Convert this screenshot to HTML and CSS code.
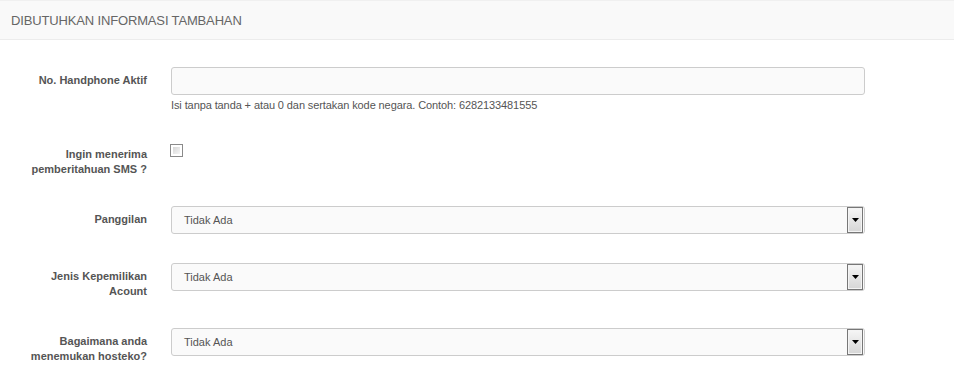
FILE: index.html
```html
<!DOCTYPE html>
<html lang="id">
<head>
  <meta charset="UTF-8" />
  <title>Informasi Tambahan</title>
  <link rel="stylesheet" href="styles.css">
</head>
<body>

<div class="panel-heading">DIBUTUHKAN INFORMASI TAMBAHAN</div>

<form class="form-horizontal">
  <!-- No. handphone -->
  <div class="form-group">
    <label class="control-label" for="hp">No. Handphone Aktif</label>
    <div class="controls">
      <input type="text" id="hp" class="form-control">
      <div class="help-block">Isi tanpa tanda + atau 0 dan sertakan kode negara. Contoh: 6282133481555</div>
    </div>
  </div>

  <!-- SMS -->
  <div class="form-group">
    <label class="control-label check-label" for="sms">Ingin menerima pemberitahuan SMS ?</label>
    <div class="controls">
      <input type="checkbox" id="sms" class="checkbox">
    </div>
  </div>

  <div class="form-group">
    <label class="control-label">Panggilan</label>
    <div class="controls">
      <div class="select"><span class="select-text">Tidak Ada</span><span class="select-btn"><svg width="7" height="4" viewBox="0 0 7 4"><polygon points="0,0 7,0 3.5,4" fill="#000"/></svg></span></div>
    </div>
  </div>

  <div class="form-group">
    <label class="control-label">Jenis Kepemilikan Acount</label>
    <div class="controls">
      <div class="select"><span class="select-text">Tidak Ada</span><span class="select-btn"><svg width="7" height="4" viewBox="0 0 7 4"><polygon points="0,0 7,0 3.5,4" fill="#000"/></svg></span></div>
    </div>
  </div>

  <div class="form-group">
    <label class="control-label">Bagaimana anda menemukan hosteko?</label>
    <div class="controls">
      <div class="select"><span class="select-text">Tidak Ada</span><span class="select-btn"><svg width="7" height="4" viewBox="0 0 7 4"><polygon points="0,0 7,0 3.5,4" fill="#000"/></svg></span></div>
    </div>
  </div>
</form>

</body>
</html>
```

FILE: styles.css
```css
body {
  margin: 0;
  background: #fff;
  font-family: "Liberation Sans", Arial, sans-serif;
  color: #555;
}
.panel-heading {
  height: 40px;
  line-height: 39px;
  padding-left: 11px;
  box-sizing: border-box;
  background: #f9f9f9;
  border-top: 1px solid #f0f0f0;
  border-bottom: 1px solid #ececec;
  font-size: 13px;
  letter-spacing: -0.15px;
  color: #666;
}
.form-horizontal {
  padding-top: 27px;
}
.form-group {
  display: grid;
  grid-template-columns: 147px 694px;
  column-gap: 24px;
  align-items: start;
  margin-bottom: 29px;
}
.control-label {
  padding-top: 6px;
  padding-left: 30px;
  font-size: 11px;
  font-weight: bold;
  line-height: 15px;
  text-align: right;
  color: #555;
}
.check-label {
  padding-top: 3px;
}
.form-control {
  display: block;
  width: 100%;
  height: 28px;
  margin: 0;
  box-sizing: border-box;
  border: 1px solid #ccc;
  border-radius: 3px;
  background: #fafafa;
}
.help-block {
  margin: 3px 0 2px;
  font-size: 11px;
  line-height: 15px;
  letter-spacing: -0.1px;
  color: #555;
}
.checkbox {
  appearance: none;
  -webkit-appearance: none;
  display: block;
  width: 13px;
  height: 13px;
  margin: 0 0 0 -1px;
  padding: 2px;
  box-sizing: border-box;
  border: 1px solid #8a8a8a;
  background: linear-gradient(135deg, #d6d6d6, #f6f6f6) content-box, #fff;
}
.select {
  display: flex;
  align-items: center;
  height: 28px;
  box-sizing: border-box;
  border: 1px solid #ccc;
  border-radius: 3px;
  background: #fafafa;
}
.select-text {
  flex: 1;
  padding-left: 12px;
  font-size: 11px;
  color: #555;
}
.select-btn {
  display: flex;
  align-items: center;
  justify-content: center;
  width: 16px;
  height: 26px;
  margin-right: 1px;
  box-sizing: border-box;
  border: 1px solid #777;
  box-shadow: inset 0 0 0 1px #f4f4f4;
  background: linear-gradient(#f6f6f6, #d6d6d6);
}
```
